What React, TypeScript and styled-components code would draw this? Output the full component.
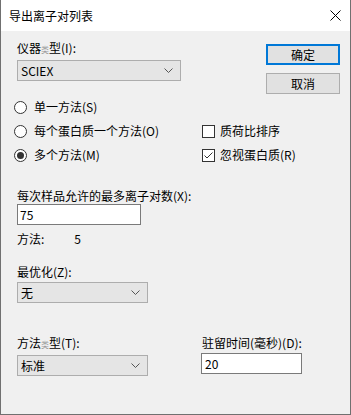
import React from 'react'
import styled, { createGlobalStyle } from 'styled-components'

const GlobalStyle = createGlobalStyle`
  html, body {
    margin: 0;
    padding: 0;
    background: #ffffff;
  }
  body {
    font-family: "Noto Sans CJK SC", "Noto Sans", sans-serif;
    font-size: 12px;
    color: #000;
  }
`

const Chevron: React.FC = () => (
  <svg width="9" height="5" viewBox="0 0 9 5">
    <polyline points="0.5,0.5 4.5,4.5 8.5,0.5" fill="none" stroke="#555" strokeWidth="1" />
  </svg>
)

const Combo: React.FC<{ value: string; width: number }> = ({ value, width }) => (
  <StyledCombo style={{ width }}>
    <span>{value}</span>
    <Chevron />
  </StyledCombo>
)

const Radio: React.FC<{ checked?: boolean; label: React.ReactNode }> = ({ checked, label }) => (
  <OptionRow>
    <RadioCircle>{checked && <RadioDot />}</RadioCircle>
    <OptionText>{label}</OptionText>
  </OptionRow>
)

const Check: React.FC<{ checked?: boolean; label: React.ReactNode }> = ({ checked, label }) => (
  <OptionRow>
    <CheckBox>
      {checked && (
        <svg width="11" height="11" viewBox="0 0 11 11">
          <polyline points="1.5,5.5 4,8 9.5,2.5" fill="none" stroke="#333" strokeWidth="1" />
        </svg>
      )}
    </CheckBox>
    <CheckText>{label}</CheckText>
  </OptionRow>
)

const App: React.FC = () => {
  return (
    <>
      <GlobalStyle />
      <Window>
        <TitleBar>
          <Title>导出离子对列表</Title>
          <svg width="11" height="11" viewBox="0 0 11 11">
            <path d="M0.5 0.5 L10.5 10.5 M10.5 0.5 L0.5 10.5" stroke="#000" strokeWidth="1" />
          </svg>
        </TitleBar>
        <Body>
          <TopRow>
            <Field>
              <Label>
                仪器<Faint>类</Faint>型(I):
              </Label>
              <Combo value="SCIEX" width={164} />
            </Field>
            <ButtonColumn>
              <Button primary>确定</Button>
              <Button>取消</Button>
            </ButtonColumn>
          </TopRow>

          <Options>
            <Radio label="单一方法(S)" />
            <span />
            <Radio label="每个蛋白质一个方法(O)" />
            <Check label="质荷比排序" />
            <Radio checked label="多个方法(M)" />
            <Check checked label="忽视蛋白质(R)" />
          </Options>

          <Section top={21}>
            <Label>每次样品允许的最多离子对数(X):</Label>
            <TextBox width={124}>75</TextBox>
          </Section>

          <MethodCount>
            <span>方法:</span>
            <MethodValue>5</MethodValue>
          </MethodCount>

          <Section top={17}>
            <Label>最优化(Z):</Label>
            <Combo value="无" width={131} />
          </Section>

          <BottomRow>
            <Field>
              <Label>
                方法<Faint>类</Faint>型(T):
              </Label>
              <Combo value="标准" width={131} />
            </Field>
            <DwellField>
              <Label>驻留时间(毫秒)(D):</Label>
              <TextBox width={101} indent={3} gap={2}>
                20
              </TextBox>
            </DwellField>
          </BottomRow>
        </Body>
      </Window>
    </>
  )
}

const Window = styled.div`
  width: 351px;
  height: 415px;
  box-sizing: border-box;
  border: 1px solid #707070;
  border-top: none;
  background: #f0f0f0;
  display: flex;
  flex-direction: column;
`

const TitleBar = styled.div`
  height: 31px;
  flex: none;
  background: #ffffff;
  display: flex;
  align-items: center;
  justify-content: space-between;
  padding: 0 9px 0 8px;
`

const Title = styled.div`
  font-size: 12px;
  line-height: 16px;
`

const Body = styled.div`
  display: flex;
  flex-direction: column;
  padding: 9px 10px 0 16px;
`

const TopRow = styled.div`
  display: flex;
  justify-content: space-between;
  align-items: flex-start;
`

const Field = styled.div`
  display: flex;
  flex-direction: column;
`

const Label = styled.div`
  line-height: 16px;
  white-space: nowrap;
`

const Faint = styled.span`
  font-size: 8px;
  color: #9a9a9a;
`

const StyledCombo = styled.div`
  box-sizing: border-box;
  height: 21px;
  margin-top: 2px;
  background: #e5e5e5;
  border: 1px solid #adadad;
  display: flex;
  align-items: center;
  justify-content: space-between;
  padding: 0 7px 0 3px;
  line-height: 16px;
`

const ButtonColumn = styled.div`
  margin-top: 4px;
  display: flex;
  flex-direction: column;
  gap: 8px;
`

const Button = styled.div<{ primary?: boolean }>`
  box-sizing: border-box;
  width: 74px;
  height: 21px;
  background: #e1e1e1;
  border: ${(p) => (p.primary ? '2px solid #0078d7' : '1px solid #adadad')};
  display: flex;
  align-items: center;
  justify-content: center;
  line-height: 16px;
`

const Options = styled.div`
  display: grid;
  grid-template-columns: 188px auto;
  grid-auto-rows: 24px;
  margin: 1px 0 0 -3px;
`

const OptionRow = styled.div`
  display: flex;
  align-items: center;
`

const RadioCircle = styled.span`
  box-sizing: border-box;
  width: 13px;
  height: 13px;
  border: 1px solid #333;
  border-radius: 50%;
  background: #fff;
  display: flex;
  align-items: center;
  justify-content: center;
`

const RadioDot = styled.span`
  width: 7px;
  height: 7px;
  border-radius: 50%;
  background: #333;
`

const CheckBox = styled.span`
  box-sizing: border-box;
  width: 13px;
  height: 13px;
  border: 1px solid #333;
  background: #fff;
  display: flex;
  align-items: center;
  justify-content: center;
`

const OptionText = styled.span`
  margin-left: 7px;
  line-height: 16px;
`

const CheckText = styled.span`
  margin-left: 5px;
  line-height: 16px;
`

const Section = styled.div<{ top: number }>`
  display: flex;
  flex-direction: column;
  margin-top: ${(p) => p.top}px;
`

const TextBox = styled.div<{ width: number; indent?: number; gap?: number }>`
  box-sizing: border-box;
  width: ${(p) => p.width}px;
  height: 21px;
  margin-top: ${(p) => p.gap ?? 0}px;
  background: #fff;
  border: 1px solid #7a7a7a;
  padding-left: ${(p) => p.indent ?? 2}px;
  display: flex;
  align-items: center;
  line-height: 16px;
`

const MethodCount = styled.div`
  display: flex;
  margin-top: 6px;
  line-height: 16px;
`

const MethodValue = styled.span`
  margin-left: 30px;
`

const BottomRow = styled.div`
  display: flex;
  margin-top: 32px;
`

const DwellField = styled.div`
  display: flex;
  flex-direction: column;
  margin-left: 53px;

  ${Label} {
    margin-left: 1px;
  }
`

export default App
